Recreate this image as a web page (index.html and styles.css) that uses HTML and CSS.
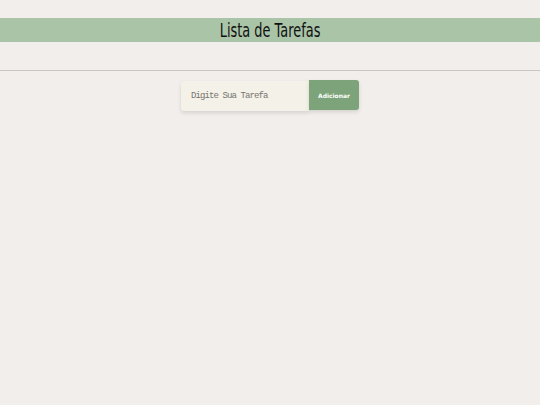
FILE: index.html
```html
<!DOCTYPE html>
<html lang="pt">
<head>
  <meta charset="UTF-8">
  <meta name="viewport" content="width=device-width, initial-scale=1.0">
  <title>Lista de Tarefas</title>
  <link rel="stylesheet" href="styles.css">
</head>
<body>
<header class="topo">
  <h1>Lista de Tarefas</h1>
</header>
<hr class="divisor">
<div class="form-tarefa">
  <input type="text" id="tarefa" placeholder="Digite Sua Tarefa">
  <button id="adicionar">Adicionar</button>
</div>
<ul class="lista" id="lista"></ul>
</body>
</html>
```

FILE: styles.css
```css
body {
    margin: 0;
    padding: 0;
    background: #f1eeeb;
    font-family: 'DejaVu Sans', sans-serif;
    height: 100vh;
}

.topo {
    margin-top: 18px;
    background: #aac4a8;
    height: 24px;
    display: flex;
    justify-content: center;
    align-items: center;
}

.topo h1 {
    margin: 0;
    font-size: 19px;
    font-weight: normal;
    color: #111;
    transform: scaleX(0.68);
}

.divisor {
    margin: 28px 0 0 0;
    border: none;
    border-top: 1px solid #c9c6c3;
    height: 0;
}

.form-tarefa {
    display: flex;
    justify-content: center;
    margin-top: 9px;
}

.form-tarefa input {
    width: 128px;
    height: 30px;
    margin-top: 1px;
    box-sizing: border-box;
    border: none;
    outline: none;
    background: #f4f1e8;
    border-radius: 3px 0 0 3px;
    padding: 0 10px;
    font-family: 'Liberation Mono', monospace;
    font-size: 9px;
    letter-spacing: -0.9px;
    box-shadow: 0 2px 4px rgba(0, 0, 0, 0.12);
}

.form-tarefa input::placeholder {
    color: #77746e;
}

.form-tarefa button {
    width: 50px;
    height: 30px;
    border: none;
    background: #7ca37a;
    color: #fff;
    font-family: 'DejaVu Sans', sans-serif;
    font-weight: bold;
    font-size: 6px;
    border-radius: 0 3px 3px 0;
    box-shadow: 0 2px 4px rgba(0, 0, 0, 0.12);
    cursor: pointer;
}

.lista {
    list-style: none;
    padding: 0;
}
```
